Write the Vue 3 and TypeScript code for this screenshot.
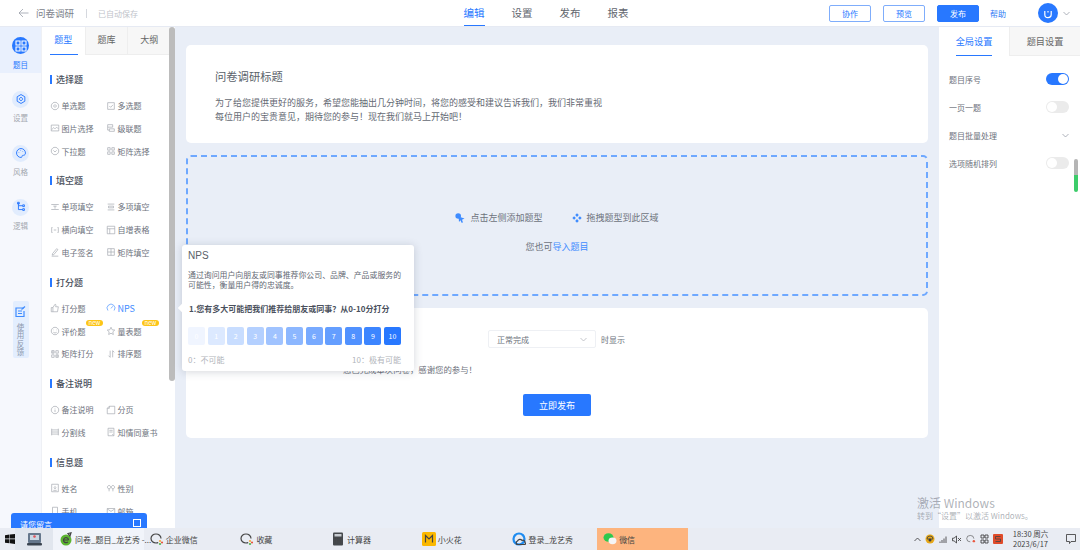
<script setup lang="ts">
interface Item { label: string; icon: string; badge?: boolean; active?: boolean }
interface Group { title: string; items: Item[] }

const icons: Record<string, string[]> = {
  radio: ['M6 1.500a4.500 4.500 0 1 0 .01 0z', 'M6 4.500a1.500 1.500 0 1 0 .01 0z'],
  check: ['M2 2h8v8H2z', 'M4 6l1.600 1.600L8.400 4.600'],
  image: ['M1.500 2.500h9v7h-9z', 'M2 8l2.500-2.500L6 7l2-2 2 2'],
  cascade: ['M2 2h6v3H2z', 'M4 7h6v3H4z', 'M2 5v3.500h2'],
  drop: ['M6 1.500a4.500 4.500 0 1 0 .01 0z', 'M4 5.200l2 2 2-2'],
  matrix: ['M2 2h3v3H2z', 'M7 2h3v3H7z', 'M2 7h3v3H2z', 'M7 7h3v3H7z'],
  input: ['M1.500 3h9', 'M1.500 9h9', 'M4 5h4', 'M6 5v3'],
  multi: ['M2 2.500h8', 'M2 9.500h8', 'M3 5h6v2H3z'],
  hfill: ['M3 3H2v6h1', 'M9 3h1v6H9', 'M4.500 6h3'],
  table: ['M1.500 1.500h9v9h-9z', 'M1.500 4.500h9', 'M4.500 4.500v6'],
  sign: ['M3 8l5-6 1.500 1.200-5 6L2.700 9.700z', 'M2 11h8'],
  mfill: ['M2 2h4v4H2z', 'M6 6h4v4H6z', 'M6 2h4v4', 'M2 6v4h4'],
  thumb: ['M1.500 5.500h2v5h-2z', 'M3.500 5.500L6 1.500c1 0 1.200 1 1 2L6.800 4.500H10l-1 6H3.500'],
  gauge: ['M2.300 9A4.700 4.700 0 1 1 9.700 9', 'M6 6.500L8 4'],
  face: ['M6 1.500a4.500 4.500 0 1 0 .01 0z', 'M4 7.500c1 1 3 1 4 0', 'M4.200 4.500v.5', 'M7.800 4.500v.5'],
  star: ['M6 1.500l1.400 3 3.100.4-2.300 2.100.6 3.200L6 8.700l-2.800 1.500.6-3.200L1.500 4.900l3.100-.4z'],
  mscore: ['M2 2h3v3H2z', 'M7 2h3v3H7z', 'M2 7h3v3H2z', 'M7 7h3v3H7z', 'M3.500 2v3', 'M8.500 7v3'],
  sort: ['M5 2v8', 'M5 10l-2-2', 'M8 2v8', 'M8 2l2 2'],
  info: ['M6 1.500a4.500 4.500 0 1 0 .01 0z', 'M6 5.500v3', 'M6 3.500v.6'],
  page: ['M4 1.500h6.500v9h-9V4z', 'M4 1.500V4H1.500'],
  line: ['M2 2v8', 'M10 2v8', 'M2 6h8', 'M2 3.500h8', 'M2 8.500h8'],
  doc: ['M2.500 1.500h7v9h-7z', 'M4 4h4', 'M4 6h4', 'M7.500 8.500l1.500 1.500'],
  name: ['M2 1.500h8v9H2z', 'M6 3.500v3', 'M4.500 5.500L6 7l1.500-1.500', 'M4 8.800h4'],
  gender: ['M3.700 3a2 2 0 1 0 .01 0z', 'M8.300 3a2 2 0 1 0 .01 0z', 'M3.700 7v3', 'M8.300 7v3'],
  phone: ['M3 1.500h6v9H3z', 'M5 9h2'],
  mail: ['M1.500 3h9v6.500h-9z', 'M1.500 3.500L6 6.500l4.500-3'],
}

const groups: Group[] = [
  { title: '选择题', items: [
    { label: '单选题', icon: 'radio' }, { label: '多选题', icon: 'check' },
    { label: '图片选择', icon: 'image' }, { label: '级联题', icon: 'cascade' },
    { label: '下拉题', icon: 'drop' }, { label: '矩阵选择', icon: 'matrix' },
  ] },
  { title: '填空题', items: [
    { label: '单项填空', icon: 'input' }, { label: '多项填空', icon: 'multi' },
    { label: '横向填空', icon: 'hfill' }, { label: '自增表格', icon: 'table' },
    { label: '电子签名', icon: 'sign' }, { label: '矩阵填空', icon: 'mfill' },
  ] },
  { title: '打分题', items: [
    { label: '打分题', icon: 'thumb' }, { label: 'NPS', icon: 'gauge', active: true },
    { label: '评价题', icon: 'face', badge: true }, { label: '量表题', icon: 'star', badge: true },
    { label: '矩阵打分', icon: 'mscore' }, { label: '排序题', icon: 'sort' },
  ] },
  { title: '备注说明', items: [
    { label: '备注说明', icon: 'info' }, { label: '分页', icon: 'page' },
    { label: '分割线', icon: 'line' }, { label: '知情同意书', icon: 'doc' },
  ] },
  { title: '信息题', items: [
    { label: '姓名', icon: 'name' }, { label: '性别', icon: 'gender' },
    { label: '手机', icon: 'phone' }, { label: '邮箱', icon: 'mail' },
  ] },
]

const rail = [
  { label: '设置', d: ['M7 1.800l4.500 2.600v5.200L7 12.200 2.500 9.600V4.400z', 'M7 5.200a1.800 1.800 0 1 0 .01 0z'] },
  { label: '风格', d: ['M7 1.800a5.200 5.200 0 1 0 0 10.400c1.500 0 1-1.400 1.300-2 .5-.9 3.900.3 3.900-3.200 0-3-2.500-5.200-5.200-5.200z', 'M4.500 6v.5', 'M6.500 4v.5', 'M9 5v.5'] },
  { label: '逻辑', d: ['M4 2v8h5', 'M4 5.500h5', 'M3 1.500h2v2H3z', 'M9 4.500h2v2H9z', 'M9 9h2v2H9z'] },
]

const settings = [
  { label: '题目序号', kind: 'on' },
  { label: '一页一题', kind: 'off' },
  { label: '题目批量处理', kind: 'chev' },
  { label: '选项随机排列', kind: 'off' },
]

const scale = Array.from({ length: 11 }, (_, i) => i)
const scaleColor = (i: number): string => `rgba(40, 120, 255, ${(0.07 + i * 0.093).toFixed(3)})`

const apps = [
  { label: '问卷_题目_龙艺秀 -...', icon: 'e', active: true },
  { label: '企业微信', icon: 'wework' },
  { label: '收藏', icon: 'wework' },
  { label: '计算器', icon: 'calc' },
  { label: '小火花', icon: 'spark' },
  { label: '登录_龙艺秀', icon: 'login' },
  { label: '微信', icon: 'wechat', orange: true },
]
</script>

<template>
  <div class="page">
    <header class="top">
      <div class="top-left">
        <svg class="back" width="11" height="10" viewBox="0 0 11 10"><path d="M10.500 5H1M5 1L1 5l4 4" /></svg>
        <span class="doc-name">问卷调研</span>
        <i class="sep"></i>
        <span class="saved">已自动保存</span>
      </div>
      <nav class="top-nav">
        <a class="nav on">编辑</a><a class="nav">设置</a><a class="nav">发布</a><a class="nav">报表</a>
      </nav>
      <div class="top-right">
        <button class="btn">协作</button>
        <button class="btn">预览</button>
        <button class="btn solid">发布</button>
        <span class="help">帮助</span>
        <span class="avatar">
          <svg width="10" height="11" viewBox="0 0 10 11"><path d="M1.800 3v3.500a3.200 3.200 0 0 0 6.400 0V3" /><path d="M5 3v1.500" /></svg>
        </span>
        <svg class="chev" width="7" height="5" viewBox="0 0 7 5"><path d="M.5 1l3 3 3-3" /></svg>
      </div>
    </header>

    <div class="body">
      <aside class="rail">
        <div class="rail-item active">
          <span class="rail-ico solid">
            <svg width="12" height="12" viewBox="0 0 12 12"><path d="M1 1h4v4H1zM7 1h4v4H7zM1 7h4v4H1zM7 7h4v4H7z" /></svg>
          </span>
          <span>题目</span>
        </div>
        <div v-for="r in rail" :key="r.label" class="rail-item">
          <span class="rail-ico">
            <svg width="12" height="12" viewBox="0 0 14 14"><path v-for="p in r.d" :key="p" :d="p" /></svg>
          </span>
          <span>{{ r.label }}</span>
        </div>
        <div class="feedback">
          <svg width="11" height="11" viewBox="0 0 11 11"><path d="M9 2H1v8.500h8V5" /><path d="M3 5h4M3 7.500h4M6.500 3.500L10 .5" /></svg>
          <span>使用反馈</span>
        </div>
      </aside>

      <section class="panel">
        <div class="tabs">
          <span class="tab on">题型</span><span class="tab">题库</span><span class="tab">大纲</span>
        </div>
        <div class="groups">
          <div v-for="g in groups" :key="g.title" class="group">
            <h4 class="group-title">{{ g.title }}</h4>
            <div class="grid">
              <div v-for="it in g.items" :key="it.label" class="item" :class="{ active: it.active }">
                <svg width="10" height="10" viewBox="0 0 12 12"><path v-for="p in icons[it.icon]" :key="p" :d="p" /></svg>
                <span>{{ it.label }}</span>
                <em v-if="it.badge" class="new">new</em>
              </div>
            </div>
          </div>
        </div>
        <div class="thumb"></div>
      </section>

      <main class="canvas">
        <section class="card intro">
          <h1>问卷调研标题</h1>
          <p>为了给您提供更好的服务，希望您能抽出几分钟时间，将您的感受和建议告诉我们，我们非常重视<br />每位用户的宝贵意见，期待您的参与！现在我们就马上开始吧！</p>
        </section>

        <section class="drop">
          <div class="drop-row">
            <span class="hint">
              <svg width="10" height="10" viewBox="0 0 10 10"><circle class="fill" cx="3.200" cy="3" r="2.800" /><path class="fill" d="M3.500 3.500L9.500 5.500 7 6.700 8 9.500 6.500 9.800 5.500 7.300 4 9z" /></svg>
              点击左侧添加题型
            </span>
            <span class="hint">
              <svg width="10" height="10" viewBox="0 0 10 10"><path class="fill" d="M5 .3L6.800 2.100 5 3.900 3.200 2.100zM5 6.100L6.800 7.900 5 9.700 3.200 7.900zM2.100 3.200L3.900 5 2.100 6.800 .3 5zM7.900 3.200L9.700 5 7.900 6.800 6.100 5z" /></svg>
              拖拽题型到此区域
            </span>
          </div>
          <p class="import">您也可<a>导入题目</a></p>
        </section>

        <section class="card finish">
          <div class="finish-row">
            <div class="select">
              <span>正常完成</span>
              <svg width="7" height="5" viewBox="0 0 7 5"><path d="M.5 1l3 3 3-3" /></svg>
            </div>
            <span class="suffix">时显示</span>
          </div>
          <p class="thanks">您已完成本次问卷，感谢您的参与！</p>
          <button class="publish">立即发布</button>
        </section>
      </main>

      <aside class="right">
        <div class="right-tabs"><span class="rtab on"><b>全局设置</b></span><span class="rtab">题目设置</span></div>
        <div class="settings">
          <div v-for="s in settings" :key="s.label" class="setting">
            <span>{{ s.label }}</span>
            <i v-if="s.kind !== 'chev'" class="switch" :class="s.kind"></i>
            <svg v-else class="chev" width="7" height="5" viewBox="0 0 7 5"><path d="M.5 1l3 3 3-3" /></svg>
          </div>
        </div>
        <div class="r-thumb"></div>
      </aside>

      <div class="popover">
        <i class="arrow"></i>
        <h5>NPS</h5>
        <p class="pop-desc">通过询问用户向朋友或同事推荐你公司、品牌、产品或服务的可能性，衡量用户得的忠诚度。</p>
        <p class="pop-q">1.您有多大可能把我们推荐给朋友或同事？从0-10分打分</p>
        <div class="scale">
          <span v-for="n in scale" :key="n" :style="{ background: scaleColor(n) }">{{ n }}</span>
        </div>
        <div class="scale-labels"><span>0：不可能</span><span>10：极有可能</span></div>
      </div>

      <div class="chat"><span>请您留言</span><i></i></div>
      <div class="watermark"><div>激活 Windows</div><small>转到“设置”以激活 Windows。</small></div>
    </div>

    <footer class="taskbar">
      <svg class="start" width="10" height="10" viewBox="0 0 10 10"><path d="M0 1.300L4.500.6v4H0zM5 .5L10 0v4.600H5zM0 5.200h4.500v4.100L0 8.700zM5 5.200h5V10l-5-.7z" /></svg>
      <span class="desk">
        <svg width="15" height="14" viewBox="0 0 15 14"><rect x="1" y="1" width="13" height="10" rx="1" fill="#65778c" /><rect x="3" y="3" width="9" height="5" fill="#c9d6e3" /><circle cx="7.500" cy="4.500" r="1.300" fill="#e0525a" /><rect y="11" width="15" height="2.500" rx="1" fill="#3a4450" /></svg>
      </span>
      <div v-for="a in apps" :key="a.label" class="app" :class="{ active: a.active, orange: a.orange }">
        <svg width="14" height="14" viewBox="0 0 14 14">
          <template v-if="a.icon === 'e'">
            <circle cx="7" cy="8" r="5.500" fill="#5cb531" /><path d="M9 1.500L12 .8 11 4z" fill="#8ad04a" stroke="none" /><path d="M4.500 8h5M9.500 8a2.500 2.500 0 1 0-.6 1.800" fill="none" stroke="#fff" stroke-width="1.300" />
          </template>
          <template v-else-if="a.icon === 'wework'">
            <path d="M6 2a5 4.500 0 1 0 0 9c.8 0 1.500-.2 2.200-.4" fill="none" stroke="#2b8af0" stroke-width="1.500" />
            <path d="M6 2a5 4.500 0 0 1 5 4.500" fill="none" stroke="#2bb0f0" stroke-width="1.500" />
            <circle cx="10" cy="9" r="1.100" fill="#f3a73b" /><circle cx="12" cy="10.500" r="1.100" fill="#e9573f" /><circle cx="10" cy="12" r="1.100" fill="#4bb54a" />
          </template>
          <template v-else-if="a.icon === 'calc'">
            <rect x="2" y=".5" width="10" height="13" rx="1" fill="#45484c" /><rect x="3.500" y="2" width="7" height="2.500" fill="#c7cbd0" /><path d="M3.500 6.500h7M3.500 8.800h7M3.500 11h7" stroke="#c7cbd0" stroke-dasharray="1.500 1" />
          </template>
          <template v-else-if="a.icon === 'spark'">
            <rect width="14" height="14" rx="1.500" fill="#fbb800" /><path d="M3.500 10.500v-7L7 7l3.500-3.500v7" fill="none" stroke="#fff" stroke-width="1.800" />
          </template>
          <template v-else-if="a.icon === 'login'">
            <circle cx="7" cy="7" r="5.500" fill="none" stroke="#1f8cf0" stroke-width="2.200" /><path d="M5 12.500a2 2 0 0 1 .5-3.500 2.500 2.500 0 0 1 4.500-.5 2 2 0 0 1 3 2 1.500 1.500 0 0 1 0 2z" fill="#e6f0fa" stroke="none" />
          </template>
          <template v-else>
            <ellipse cx="5.500" cy="5.500" rx="5" ry="4.300" fill="#2dc84d" /><ellipse cx="9.500" cy="8.800" rx="4" ry="3.400" fill="#f5f5f5" />
          </template>
        </svg>
        <span>{{ a.label }}</span>
      </div>
      <div class="tray">
        <svg width="7" height="5" viewBox="0 0 7 5"><path class="dark" d="M.5 4l3-3 3 3" /></svg>
        <svg width="10" height="10" viewBox="0 0 10 10"><circle cx="5" cy="5" r="4.500" fill="#e8a818" /><path d="M2 5a3 3 0 0 1 6 0z" fill="#4b9a2f" stroke="none" /><circle cx="5" cy="6" r="1.500" fill="#3d3d3d" /></svg>
        <svg width="9" height="9" viewBox="0 0 9 9"><path class="dark" d="M1 8V6.500M3 8V5M5 8V3.500M7 8V1.500" /></svg>
        <svg width="10" height="9" viewBox="0 0 10 9"><path class="dark" d="M.5 3.200h1.500L4.500 1v7L2 5.800H.5zM6 3l3 3M9 3L6 6" /></svg>
        <svg width="10" height="10" viewBox="0 0 14 14"><path d="M6 2a5 4.500 0 1 0 0 9" fill="none" stroke="#2b8af0" stroke-width="1.800" /><path d="M6 2a5 4.500 0 0 1 5 4.500" fill="none" stroke="#2bb0f0" stroke-width="1.800" /><circle cx="11" cy="10" r="1.700" fill="#e9573f" /></svg>
        <svg width="9" height="10" viewBox="0 0 9 10"><path class="dark" d="M1 1h3v3H1zM5 1h3v3H5zM1 6h3v3H1zM5 6h3v3H5z" /></svg>
        <svg width="10" height="10" viewBox="0 0 10 10"><rect width="10" height="10" rx="1" fill="#e04b2a" /><path d="M7.500 2.500h-5v2.500h5v2.500h-5" fill="none" stroke="#fff" stroke-width="1.200" /></svg>
      </div>
      <div class="clock"><span>18:30 周六</span><span>2023/6/17</span></div>
      <svg class="notify" width="10" height="10" viewBox="0 0 10 10"><path class="dark" d="M.5.500h9v7H5L3.500 9.500v-2h-3z" /></svg>
    </footer>
  </div>
</template>

<style scoped>
.page {
  width: 1080px;
  height: 550px;
  display: flex;
  flex-direction: column;
  overflow: hidden;
  background: #fff;
  color: #555b66;
  font-family: "Noto Sans CJK SC", "Liberation Sans", sans-serif;
  font-size: 8px;
}
svg path { fill: none; stroke: currentColor; stroke-width: 0.8; }
svg path.fill, svg circle.fill { fill: #3f8cff; stroke: none; }

/* header */
.top {
  height: 27px;
  flex: none;
  display: grid;
  grid-template-columns: 1fr auto 1fr;
  align-items: center;
  border-bottom: 1px solid #e6eaf3;
  box-sizing: border-box;
}
.top-left { display: flex; align-items: center; padding-left: 18px; color: #8a8f99; }
.back { color: #9aa0a9; margin-right: 7px; }
.doc-name { font-size: 9.500px; color: #7c818a; }
.sep { width: 1px; height: 9px; background: #d5d8de; margin: 0 11.500px; }
.saved { color: #c0c3ca; }
.top-nav { display: flex; gap: 27px; height: 26px; padding-left: 12px; }
.nav { font-size: 10.500px; line-height: 26px; color: #62666e; position: relative; }
.nav.on { color: #2878ff; box-shadow: inset 0 -1px #2878ff; }
.top-right { display: flex; align-items: center; justify-content: flex-end; padding-right: 10px; }
.btn {
  width: 42px; height: 17px; padding: 0; margin-right: 12px;
  border: 1px solid #7fadfb; border-radius: 2px; background: #fff;
  color: #2878ff; font: inherit; font-size: 8px;
}
.btn.solid { background: #2878ff; border-color: #2878ff; color: #fff; margin-right: 11px; }
.help { color: #2f7bf5; margin-right: 32px; }
.avatar {
  width: 20px; height: 20px; border-radius: 50%; background: #2878ff; color: #fff;
  display: flex; align-items: center; justify-content: center; margin-right: 5px;
}
.avatar svg path { stroke-width: 1.200; }
.chev { color: #9aa0a9; }

.body { flex: 1; min-height: 0; display: flex; position: relative; overflow: hidden; }

/* rail */
.rail {
  width: 41px; flex: none; background: #f6f8fd;
  display: flex; flex-direction: column; align-items: center;
  font-size: 7.500px; color: #a4a8b0;
}
.rail-item { width: 100%; height: 54px; flex: none; display: flex; flex-direction: column; align-items: center; padding-top: 17.500px; box-sizing: border-box; gap: 4.500px; }
.rail-item.active { height: 46px; padding-top: 10px; color: #2878ff; background: #e9f0fd; }
.rail-ico {
  width: 17px; height: 17px; border-radius: 50%; background: #e1ecfd; color: #2878ff;
  display: flex; align-items: center; justify-content: center; flex: none;
}
.rail-ico.solid { background: #2878ff; color: #fff; }
.rail-ico svg path { stroke-width: 1.100; }
.feedback {
  margin-top: 66px; width: 16px; height: 57px; background: #e3eefe; border-radius: 2px;
  display: flex; flex-direction: column; align-items: center; padding-top: 5px; box-sizing: border-box;
  color: #8c98ad; font-size: 7.500px;
}
.feedback svg { color: #3f8cff; flex: none; margin-bottom: 5.500px; }
.feedback svg path { stroke-width: 1.200; }
.feedback span { width: 8px; line-height: 8.500px; text-align: center; word-break: break-all; }

/* left panel */
.panel { width: 134px; flex: none; position: relative; border-left: 1px solid #eef0f5; box-sizing: border-box; overflow: hidden; background: #fff; }
.tabs { display: flex; width: 128px; height: 28px; }
.tab {
  width: 43px; background: #f7f7f7; border-left: 1px solid #eee; border-bottom: 1px solid #eee;
  box-sizing: border-box; font-size: 9px; text-align: center; line-height: 26px; color: #666;
}
.tab.on { background: #fff; color: #2878ff; border: 0; position: relative; }
.tab.on::after { content: ""; position: absolute; left: 8px; right: 7px; bottom: 0; height: 1px; background: #2878ff; }
.groups { padding: 18px 0 0 8px; }
.group { margin-bottom: 7px; }
.group-title {
  margin: 0 0 13px; font-size: 9px; font-weight: 500; line-height: 13px; color: #4a505c;
  padding-left: 6px; position: relative;
}
.group-title::before { content: ""; position: absolute; left: 0; top: 2px; width: 1.500px; height: 9px; background: #2878ff; }
.grid { display: grid; grid-template-columns: 56px 1fr; grid-auto-rows: 22.800px; }
.item { display: flex; align-items: center; gap: 1.500px; position: relative; color: #6d727c; white-space: nowrap; height: 13px; }
.item svg { flex: none; color: #a2a6ae; }
.item.active, .item.active svg { color: #3f8cff; }
.item.active { font-size: 9px; }
.new {
  position: absolute; left: 36px; top: -5px; height: 6px; padding: 0 2.500px; line-height: 6px;
  border-radius: 3px; background: #fdc516; color: #fff; font-size: 6px; font-style: normal;
}
.thumb { position: absolute; right: 0; top: 0; width: 6px; height: 354px; background: #bcbcbc; border-radius: 3px; }

/* canvas */
.canvas {
  flex: 1; min-width: 0; background: #e9eef7; padding: 18px 11px 0;
  display: flex; flex-direction: column; gap: 12px; box-sizing: border-box;
}
.card { background: #fff; border-radius: 5px; }
.intro { height: 98px; padding: 24px 29px 0; box-sizing: border-box; flex: none; }
.intro h1 { margin: 0 0 13px; font-size: 11.300px; font-weight: 400; line-height: 14px; color: #5a5f69; }
.intro p { margin: 0; font-size: 9px; line-height: 13.500px; color: #646973; }
.drop {
  height: 141px; flex: none; box-sizing: border-box; border: 2px dashed #6ea8ff; border-radius: 5px;
  display: flex; flex-direction: column; align-items: center; padding-top: 54px;
  font-size: 9px; color: #6d727c;
}
.drop-row { display: flex; gap: 29px; height: 13px; }
.hint { display: flex; align-items: center; gap: 5px; line-height: 13px; }
.import { margin: 16px 0 0; line-height: 13px; }
.import a { color: #3f8cff; }
.finish { height: 130px; flex: none; position: relative; padding-top: 22px; box-sizing: border-box; display: flex; flex-direction: column; }
.finish-row { display: flex; align-items: center; gap: 5px; padding-left: 302px; }
.select {
  width: 108px; height: 18px; border: 1px solid #eef0f4; border-radius: 2px; box-sizing: border-box;
  display: flex; align-items: center; justify-content: space-between; padding: 0 8px;
  color: #6d727c;
}
.select svg { color: #b5b8be; }
.suffix { color: #6d727c; }
.thanks { margin: 15px 0 0 157px; font-size: 8.400px; line-height: 13px; color: #6d727c; }
.publish {
  width: 68px; height: 22px; margin: 18px auto 0; border: 0; border-radius: 2px; padding: 0;
  background: #2878ff; color: #fff; font: inherit; font-size: 9px;
}

/* right */
.right { width: 141px; flex: none; position: relative; background: #fff; }
.right-tabs { display: flex; height: 29px; }
.rtab { flex: 1; text-align: center; font-size: 9.200px; line-height: 29px; color: #666; background: #f7f7f7; border-left: 1px solid #eee; border-bottom: 1px solid #eee; box-sizing: border-box; }
.rtab.on { background: #fff; color: #2878ff; border: 0; }
.rtab b { display: inline-block; height: 28px; font-weight: 400; border-bottom: 1px solid #2878ff; }
.settings { padding: 9px 11px 0 10px; }
.setting { height: 28px; display: flex; align-items: center; justify-content: space-between; color: #6d727c; }
.switch { width: 23px; height: 12px; border-radius: 6px; background: #ebebeb; position: relative; }
.switch::after { content: ""; position: absolute; left: 1px; top: 1px; width: 10px; height: 10px; border-radius: 50%; background: #fff; }
.switch.on { background: #2878ff; }
.switch.on::after { left: 12px; }
.r-thumb { position: absolute; right: 2px; top: 132px; width: 4px; height: 33px; border-radius: 2px; background: linear-gradient(#b5b5b5 0 50%, #3dcc6a 50% 100%); }

/* popover */
.popover {
  position: absolute; left: 182px; top: 218px; width: 232px; height: 126px;
  background: #fff; border-radius: 3px; box-shadow: 0 1px 8px rgba(60, 70, 90, .22);
  padding: 4px 6px; box-sizing: border-box;
}
.arrow { position: absolute; left: -3px; top: 60px; width: 6px; height: 6px; background: #fff; transform: rotate(45deg); }
.popover h5 { margin: 0 0 8px; font-size: 10px; font-weight: 400; line-height: 13px; color: #5a5f69; font-family: "Liberation Sans", sans-serif; }
.pop-desc { margin: 0; font-size: 7.900px; line-height: 10px; color: #646973; }
.pop-q { margin: 13px 0 0 1px; font-size: 8px; line-height: 12px; font-weight: 700; color: #4a505c; white-space: nowrap; }
.scale { display: flex; gap: 2.600px; margin-top: 12px; }
.scale span { width: 17px; height: 18px; line-height: 18px; border-radius: 2px; text-align: center; color: #fff; font-size: 7px; }
.scale-labels { display: flex; justify-content: space-between; margin-top: 8.500px; padding-right: 7px; color: #b2b5bb; line-height: 11px; }

.chat {
  position: absolute; left: 11px; bottom: 0; width: 136px; height: 15px; background: #2878ff;
  border-radius: 3px 3px 0 0; color: #fff; display: flex; justify-content: space-between;
  padding: 6px 6px 0 9px; box-sizing: border-box; overflow: hidden;
}
.chat span { line-height: 12px; }
.chat i { width: 8px; height: 8px; border: 1px solid #fff; box-sizing: border-box; }

.watermark { position: absolute; left: 917px; top: 469px; color: rgba(120, 125, 135, .6); font-size: 12px; line-height: 14px; pointer-events: none; font-family: "Noto Sans CJK SC", sans-serif; }
.watermark small { font-size: 8px; display: block; line-height: 11px; }

/* taskbar */
.taskbar {
  height: 22px; flex: none; background: #e9ecf3; display: flex; align-items: center;
  color: #444; font-size: 8px;
}
.start { margin-left: 5px; flex: none; }
.start path { fill: #111; stroke: none; }
.desk { width: 38px; height: 22px; background: #e1e6ee; display: flex; align-items: center; justify-content: center; flex: none; }
.app { width: 90.700px; height: 22px; flex: none; display: flex; align-items: center; gap: 2px; padding-left: 6px; box-sizing: border-box; white-space: nowrap; }
.app svg path { stroke-width: 1.200; }
.app.active { background: #f1f4fa; }
.app.orange { background: #fdb47e; }
.app svg { flex: none; }
.tray { margin-left: 226px; display: flex; align-items: center; gap: 4px; flex: none; }
.tray svg path.dark { color: #333; }
.clock { margin-left: 10px; display: flex; flex-direction: column; align-items: center; line-height: 10px; flex: none; font-size: 7.500px; }
.notify { margin-left: 18px; color: #333; flex: none; }
</style>

<style>
html, body { margin: 0; overflow: hidden; background: #fff; }
</style>
